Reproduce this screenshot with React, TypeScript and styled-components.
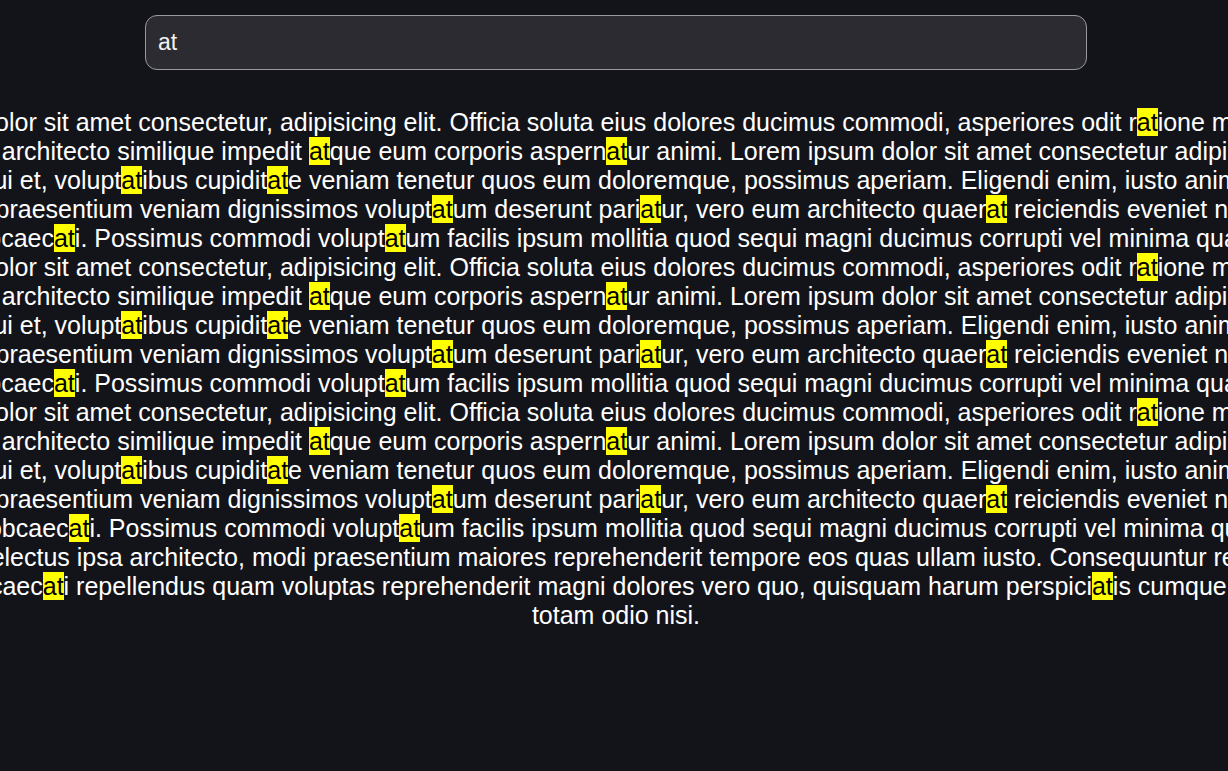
import React, { useState } from 'react'
import styled, { createGlobalStyle } from 'styled-components'

const GlobalStyle = createGlobalStyle`
  html,
  body {
    margin: 0;
    background: #131419;
  }

  body {
    color: #ffffff;
    font-family: 'Liberation Sans', Arial, sans-serif;
    overflow: hidden;
  }
`

const Page = styled.main`
  box-sizing: border-box;
  min-height: 100vh;
  display: flex;
  flex-direction: column;
  align-items: center;
  padding: 15px 0 0 4px;
  overflow: hidden;
`

const SearchInput = styled.input`
  box-sizing: border-box;
  flex-shrink: 0;
  width: 942px;
  height: 55px;
  padding: 0 12px;
  border: 1px solid #9a9a9f;
  border-radius: 12px;
  background: #2c2b31;
  color: #f2f2f2;
  caret-color: #ffffff;
  font-family: 'Liberation Sans', Arial, sans-serif;
  font-size: 23px;
  outline: none;
`

const Content = styled.section`
  flex-shrink: 0;
  width: 1600px;
  margin-top: 38px;
  text-align: center;
  font-size: 25px;
  line-height: 29px;
`

const Paragraph = styled.p`
  margin: 0;
`

const Highlight = styled.mark`
  background: #ffff00;
  color: #000000;
`

const BLOCK =
  'Lorem ipsum dolor sit amet consectetur, adipisicing elit. Officia soluta eius dolores ducimus commodi, asperiores odit ratione molestiae neque. ' +
  'Quibusdam sint architecto similique impedit atque eum corporis aspernatur animi. Lorem ipsum dolor sit amet consectetur adipisicing elit. Nemo ' +
  'sapiente quia qui et, voluptatibus cupiditate veniam tenetur quos eum doloremque, possimus aperiam. Eligendi enim, iusto animi laborum nobis ' +
  'Dolorum nemo praesentium veniam dignissimos voluptatum deserunt pariatur, vero eum architecto quaerat reiciendis eveniet nihil quidem eius, ' +
  'obcaecati. Possimus commodi voluptatum facilis ipsum mollitia quod sequi magni ducimus corrupti vel minima'

const TAIL =
  'Nesciunt sint delectus ipsa architecto, modi praesentium maiores reprehenderit tempore eos quas ullam iusto. Consequuntur recusandae sunt. ' +
  'Quibusdam obcaecati repellendus quam voluptas reprehenderit magni dolores vero quo, quisquam harum perspiciatis cumque. Sapiente illum, ' +
  'totam odio nisi.'

const PARAGRAPHS = [`${BLOCK} quae.`, `${BLOCK} quae.`, `${BLOCK} qui`, TAIL]

const escape = (value: string) => value.replace(/[.*+?^${}()|[\]\\]/g, '\\$&')

const HighlightedText: React.FC<{ text: string; query: string }> = ({ text, query }) => {
  if (!query) return <>{text}</>
  const parts = text.split(new RegExp(`(${escape(query)})`, 'gi'))
  return (
    <>
      {parts.map((part, i) =>
        part.toLowerCase() === query.toLowerCase() ? (
          <Highlight key={i}>{part}</Highlight>
        ) : (
          <React.Fragment key={i}>{part}</React.Fragment>
        ),
      )}
    </>
  )
}

export default function App() {
  const [query, setQuery] = useState('at')

  return (
    <>
      <GlobalStyle />
      <Page>
        <SearchInput
          autoFocus
          value={query}
          onChange={(e) => setQuery(e.target.value)}
        />
        <Content>
          {PARAGRAPHS.map((text, i) => (
            <Paragraph key={i}>
              <HighlightedText text={text} query={query} />
            </Paragraph>
          ))}
        </Content>
      </Page>
    </>
  )
}
